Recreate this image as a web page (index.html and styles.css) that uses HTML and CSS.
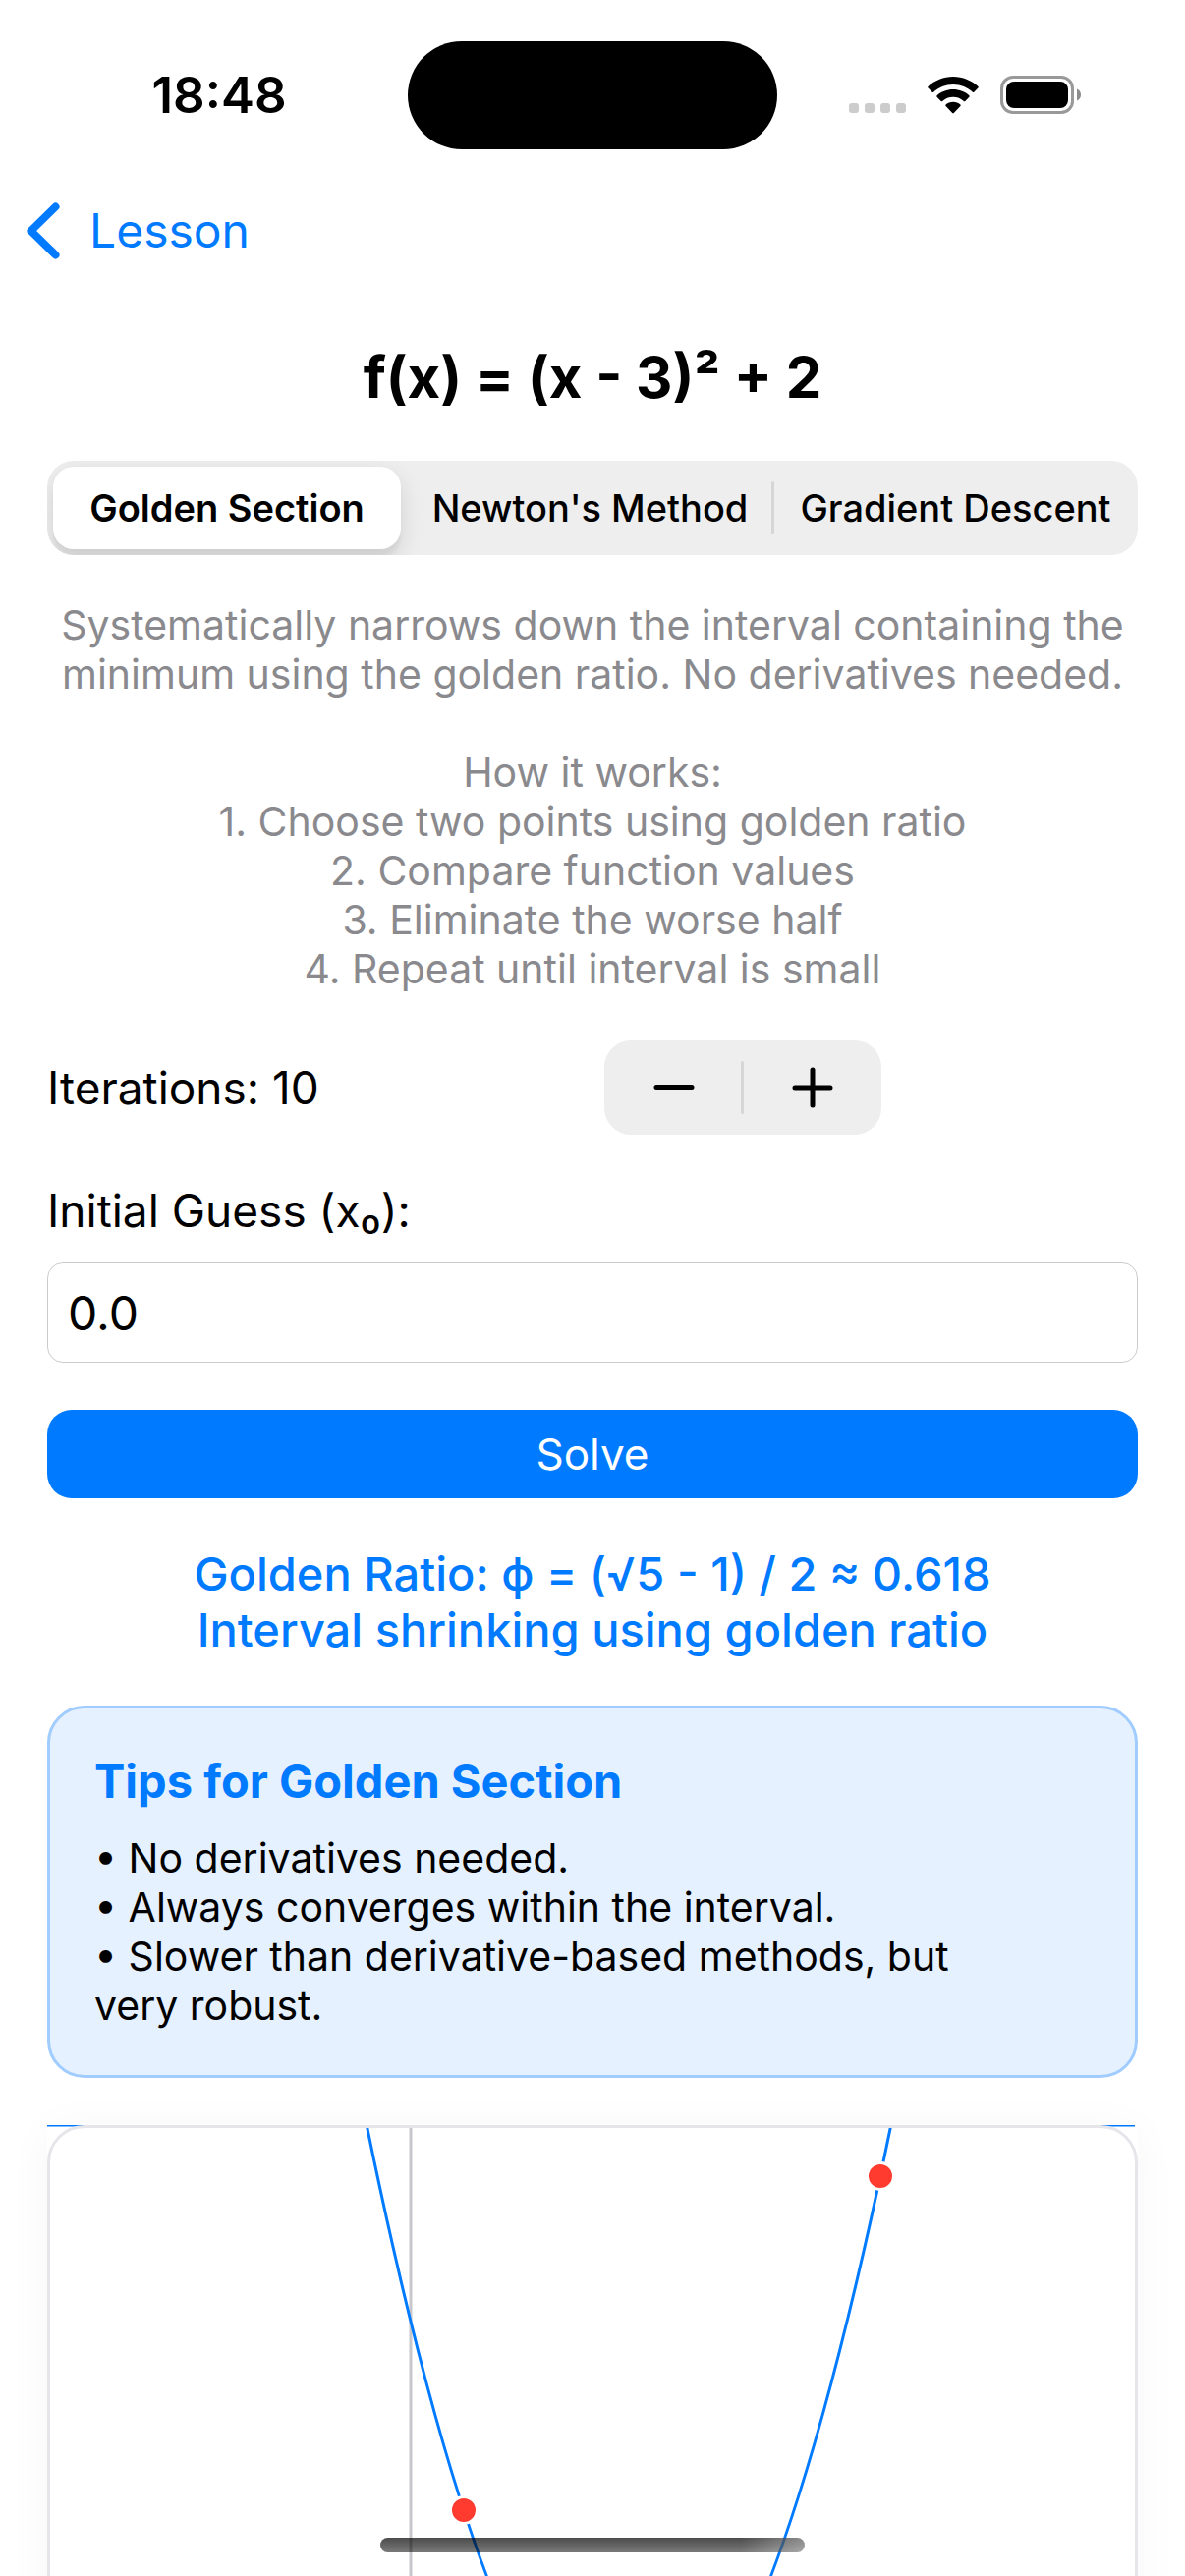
FILE: index.html
```html
<!DOCTYPE html>
<html lang="en">
<head>
<meta charset="utf-8">
<meta name="viewport" content="width=device-width, initial-scale=1">
<title>f(x) = (x - 3)² + 2</title>
<link rel="stylesheet" href="styles.css">
</head>
<body>
<div class="screen">
  <header class="status-bar">
    <time class="status-time">18:48</time>
    <div class="island"></div>
    <div class="status-icons">
      <svg class="icon-signal" viewBox="0 0 58 38" aria-hidden="true">
        <rect x="0" y="27" width="10" height="10" rx="3"/>
        <rect x="16" y="27" width="10" height="10" rx="3"/>
        <rect x="32" y="27" width="10" height="10" rx="3"/>
        <rect x="48" y="27" width="10" height="10" rx="3"/>
      </svg>
      <svg class="icon-wifi" viewBox="0 0 52 38" aria-hidden="true">
        <path d="M26 0C16.200 0 7.200 3.800.6 10.100a1 1 0 0 0 0 1.500L4.700 15.700a1 1 0 0 0 1.400 0C11.400 10.900 18.300 8 26 8s14.600 2.900 19.900 7.700a1 1 0 0 0 1.400 0L51.400 11.600a1 1 0 0 0 0-1.500C44.800 3.800 35.800 0 26 0Z"/>
        <path d="M26 13C19.700 13 13.900 15.300 9.600 19.200a1 1 0 0 0 0 1.500L13.700 24.900a1 1 0 0 0 1.400 0C18.100 22.200 21.800 20.700 26 20.700s7.900 1.500 10.900 4.200a1 1 0 0 0 1.400 0L42.400 20.700a1 1 0 0 0 0-1.500C38.100 15.300 32.300 13 26 13Z"/>
        <path d="M26 25.700C23.100 25.700 20.600 26.700 18.600 28.400a1.200 1.200 0 0 0 0 1.700L25.200 37a1.200 1.200 0 0 0 1.600 0L33.400 30.100a1.200 1.200 0 0 0 0-1.700C31.400 26.700 28.900 25.700 26 25.700Z"/>
      </svg>
      <svg class="icon-battery" viewBox="0 0 83 40" aria-hidden="true">
        <rect class="battery-shell" x="1.500" y="1.500" width="72" height="36" rx="11.500"/>
        <rect x="6" y="6" width="63" height="27" rx="8"/>
        <path class="battery-nub" d="M78 13.500c2.500 1 4 3.300 4 6s-1.500 5-4 6Z"/>
      </svg>
    </div>
  </header>

  <nav class="nav-bar">
    <a class="back" href="#lesson">
      <svg class="icon-chevron" viewBox="0 0 34 58" aria-hidden="true"><path d="M29.500 4.500 4.500 29l25 24.500"/></svg>
      <span>Lesson</span>
    </a>
  </nav>

  <main class="content">
    <h1 class="title">f(x) = (x - 3)² + 2</h1>

    <div class="segmented" role="radiogroup" aria-label="Method">
      <input class="segment-input" type="radio" name="method" id="golden" checked>
      <label class="segment" for="golden">Golden Section</label>
      <input class="segment-input" type="radio" name="method" id="newton">
      <label class="segment" for="newton">Newton's Method</label>
      <input class="segment-input" type="radio" name="method" id="gradient">
      <label class="segment" for="gradient">Gradient Descent</label>
    </div>

    <div class="description">
      <p>Systematically narrows down the interval containing the minimum using the golden ratio. No derivatives needed.</p>
      <p class="how">How it works:<br>1. Choose two points using golden ratio<br>2. Compare function values<br>3. Eliminate the worse half<br>4. Repeat until interval is small</p>
    </div>

    <div class="iterations">
      <span>Iterations: 10</span>
      <div class="stepper">
        <button class="step" type="button" aria-label="Decrement">
          <svg class="icon-step" viewBox="0 0 48 48" aria-hidden="true"><path d="M6 23.500H42"/></svg>
        </button>
        <button class="step" type="button" aria-label="Increment">
          <svg class="icon-step" viewBox="0 0 48 48" aria-hidden="true"><path d="M6 24H42M24 6V42"/></svg>
        </button>
      </div>
    </div>

    <label class="field-label" for="guess">Initial Guess (x₀):</label>
    <input class="field" id="guess" type="text" inputmode="decimal" value="0.0">

    <button class="solve" type="button">Solve</button>

    <p class="ratio">Golden Ratio: ϕ = (√5 - 1) / 2 ≈ 0.618<br>Interval shrinking using golden ratio</p>

    <section class="tips">
      <h2 class="tips-title">Tips for Golden Section</h2>
      <p class="tips-text">• No derivatives needed.<br>• Always converges within the interval.<br>• Slower than derivative-based methods, but very robust.</p>
    </section>

    <figure class="chart">
      <svg class="plot" viewBox="0 0 1110 900" role="img" aria-label="Graph of f(x) = (x - 3)² + 2">
        <path class="axis" d="M370 0V900M0 750H1110"/>
        <path class="curve" d="M0 0H325.200Q592 1300 858.800 0H1107"/>
        <circle class="point" cx="424" cy="392" r="13.500"/>
        <circle class="point" cx="848" cy="52" r="13.500"/>
      </svg>
    </figure>
  </main>

  <div class="home-indicator"></div>
</div>
</body>
</html>
```
FILE: styles.css
```css
* {
  box-sizing: border-box;
}

body,
h1,
h2,
p,
figure {
  margin: 0;
}

body {
  background: #fff;
  color: #000;
  font-family: Inter, "Liberation Sans", sans-serif;
}

button,
input {
  font-family: inherit;
}

.screen {
  position: relative;
  height: 100vh;
  overflow: hidden;
}

/* Status bar */

.status-bar {
  display: grid;
  grid-template-columns: 1fr 376px 1fr;
  align-items: center;
  padding: 42px 0 18px;
}

.status-time {
  padding-left: 31px;
  text-align: center;
  font-size: 51px;
  font-weight: 600;
  line-height: 60px;
}

.island {
  height: 110px;
  border-radius: 55px;
  background: #000;
}

.status-icons {
  display: flex;
  justify-content: flex-end;
  align-items: center;
  gap: 22px;
  padding-right: 105px;
}

.icon-signal {
  width: 58px;
  height: 38px;
  fill: #ccc;
}

.icon-wifi {
  width: 52px;
  height: 38px;
}

.icon-battery {
  width: 83px;
  height: 40px;
}

.battery-shell {
  fill: none;
  stroke: #999;
  stroke-width: 3;
}

.battery-nub {
  fill: #8c8c8c;
}

/* Navigation */

.nav-bar {
  display: flex;
  align-items: center;
  height: 130px;
  padding: 0 27px;
}

.back {
  display: flex;
  align-items: center;
  gap: 30px;
  color: #007aff;
  font-size: 48px;
  line-height: 60px;
  text-decoration: none;
}

.icon-chevron {
  width: 34px;
  height: 58px;
  fill: none;
  stroke: #007aff;
  stroke-width: 8;
  stroke-linecap: round;
  stroke-linejoin: round;
}

/* Content */

.content {
  display: flex;
  flex-direction: column;
  padding: 48px 48px 0;
}

.title {
  text-align: center;
  font-size: 58px;
  font-weight: 700;
  line-height: 72px;
}

.segmented {
  position: relative;
  display: grid;
  grid-template-columns: 366fr 373fr 371fr;
  height: 96px;
  margin-top: 49px;
  border-radius: 27px;
  background: #eee;
  overflow: hidden;
}

.segment-input {
  position: absolute;
  opacity: 0;
}

.segment {
  position: relative;
  display: flex;
  align-items: center;
  justify-content: center;
  margin: 6px;
  border-radius: 21px;
  font-size: 38px;
  font-weight: 500;
}

.segment-input:checked + .segment {
  background: #fff;
  box-shadow: 0 9px 24px rgba(0, 0, 0, 0.12), 0 9px 3px rgba(0, 0, 0, 0.04);
  font-weight: 600;
}

#gradient + .segment::before {
  content: "";
  position: absolute;
  top: 15px;
  bottom: 15px;
  left: -8px;
  width: 3px;
  border-radius: 2px;
  background: #d6d6d6;
}

.description {
  margin-top: 46px;
  color: #8a8a8e;
  text-align: center;
  font-size: 41px;
  line-height: 50px;
}

.how {
  margin-top: 50px;
}

.iterations {
  display: grid;
  grid-template-columns: 1fr 1fr;
  align-items: center;
  gap: 24px;
  margin-top: 48px;
  font-size: 46px;
}

.stepper {
  display: flex;
  width: 282px;
  height: 96px;
  border-radius: 27px;
  background: #eee;
}

.step {
  position: relative;
  display: flex;
  flex: 1;
  align-items: center;
  justify-content: center;
  padding: 0;
  border: 0;
  background: none;
}

.step + .step::before {
  content: "";
  position: absolute;
  top: 21px;
  bottom: 21px;
  left: -2px;
  width: 3px;
  border-radius: 2px;
  background: #d6d6d6;
}

.icon-step {
  width: 48px;
  height: 48px;
  fill: none;
  stroke: #000;
  stroke-width: 5;
  stroke-linecap: round;
}

.field-label {
  margin-top: 48px;
  font-size: 46px;
  line-height: 58px;
}

.field {
  width: 100%;
  height: 102px;
  margin-top: 24px;
  padding: 0 20px;
  border: 1px solid #ccc;
  border-radius: 16px;
  background: #fff;
  color: #000;
  font-size: 48px;
}

.solve {
  height: 90px;
  margin-top: 48px;
  border: 0;
  border-radius: 25px;
  background: #007aff;
  color: #fff;
  font-size: 44px;
}

.ratio {
  margin-top: 48px;
  color: #007aff;
  text-align: center;
  font-size: 47px;
  font-weight: 500;
  line-height: 57px;
}

.tips {
  margin-top: 49px;
  padding: 45px 45px 46px;
  border: 3px solid #a0ccff;
  border-radius: 38px;
  background: #e5f1ff;
}

.tips-title {
  color: #007aff;
  font-size: 47px;
  font-weight: 700;
  line-height: 57px;
}

.tips-text {
  max-width: 900px;
  margin-top: 25px;
  font-size: 41px;
  line-height: 50px;
}

/* Chart */

.chart {
  position: relative;
  margin-top: 48px;
  background: #fff;
  box-shadow: 0 6px 45px rgba(0, 0, 0, 0.04);
}

.chart::after {
  content: "";
  position: absolute;
  inset: 0;
  border: 3px solid #e5e5ea;
  border-radius: 38px;
}

.plot {
  display: block;
  width: 100%;
  height: auto;
}

.axis {
  fill: none;
  stroke: #c7c7cc;
  stroke-width: 3;
}

.curve {
  fill: none;
  stroke: #007aff;
  stroke-width: 3;
}

.point {
  fill: #ff3b30;
  stroke: #fff;
  stroke-width: 3;
}

.home-indicator {
  position: absolute;
  bottom: 24px;
  left: 50%;
  width: 432px;
  height: 15px;
  margin-left: -216px;
  border-radius: 8px;
  background: linear-gradient(to right, transparent 85%, rgba(255, 255, 255, 0.35)), linear-gradient(rgba(0, 0, 0, 0.7), rgba(0, 0, 0, 0.52));
}
```
